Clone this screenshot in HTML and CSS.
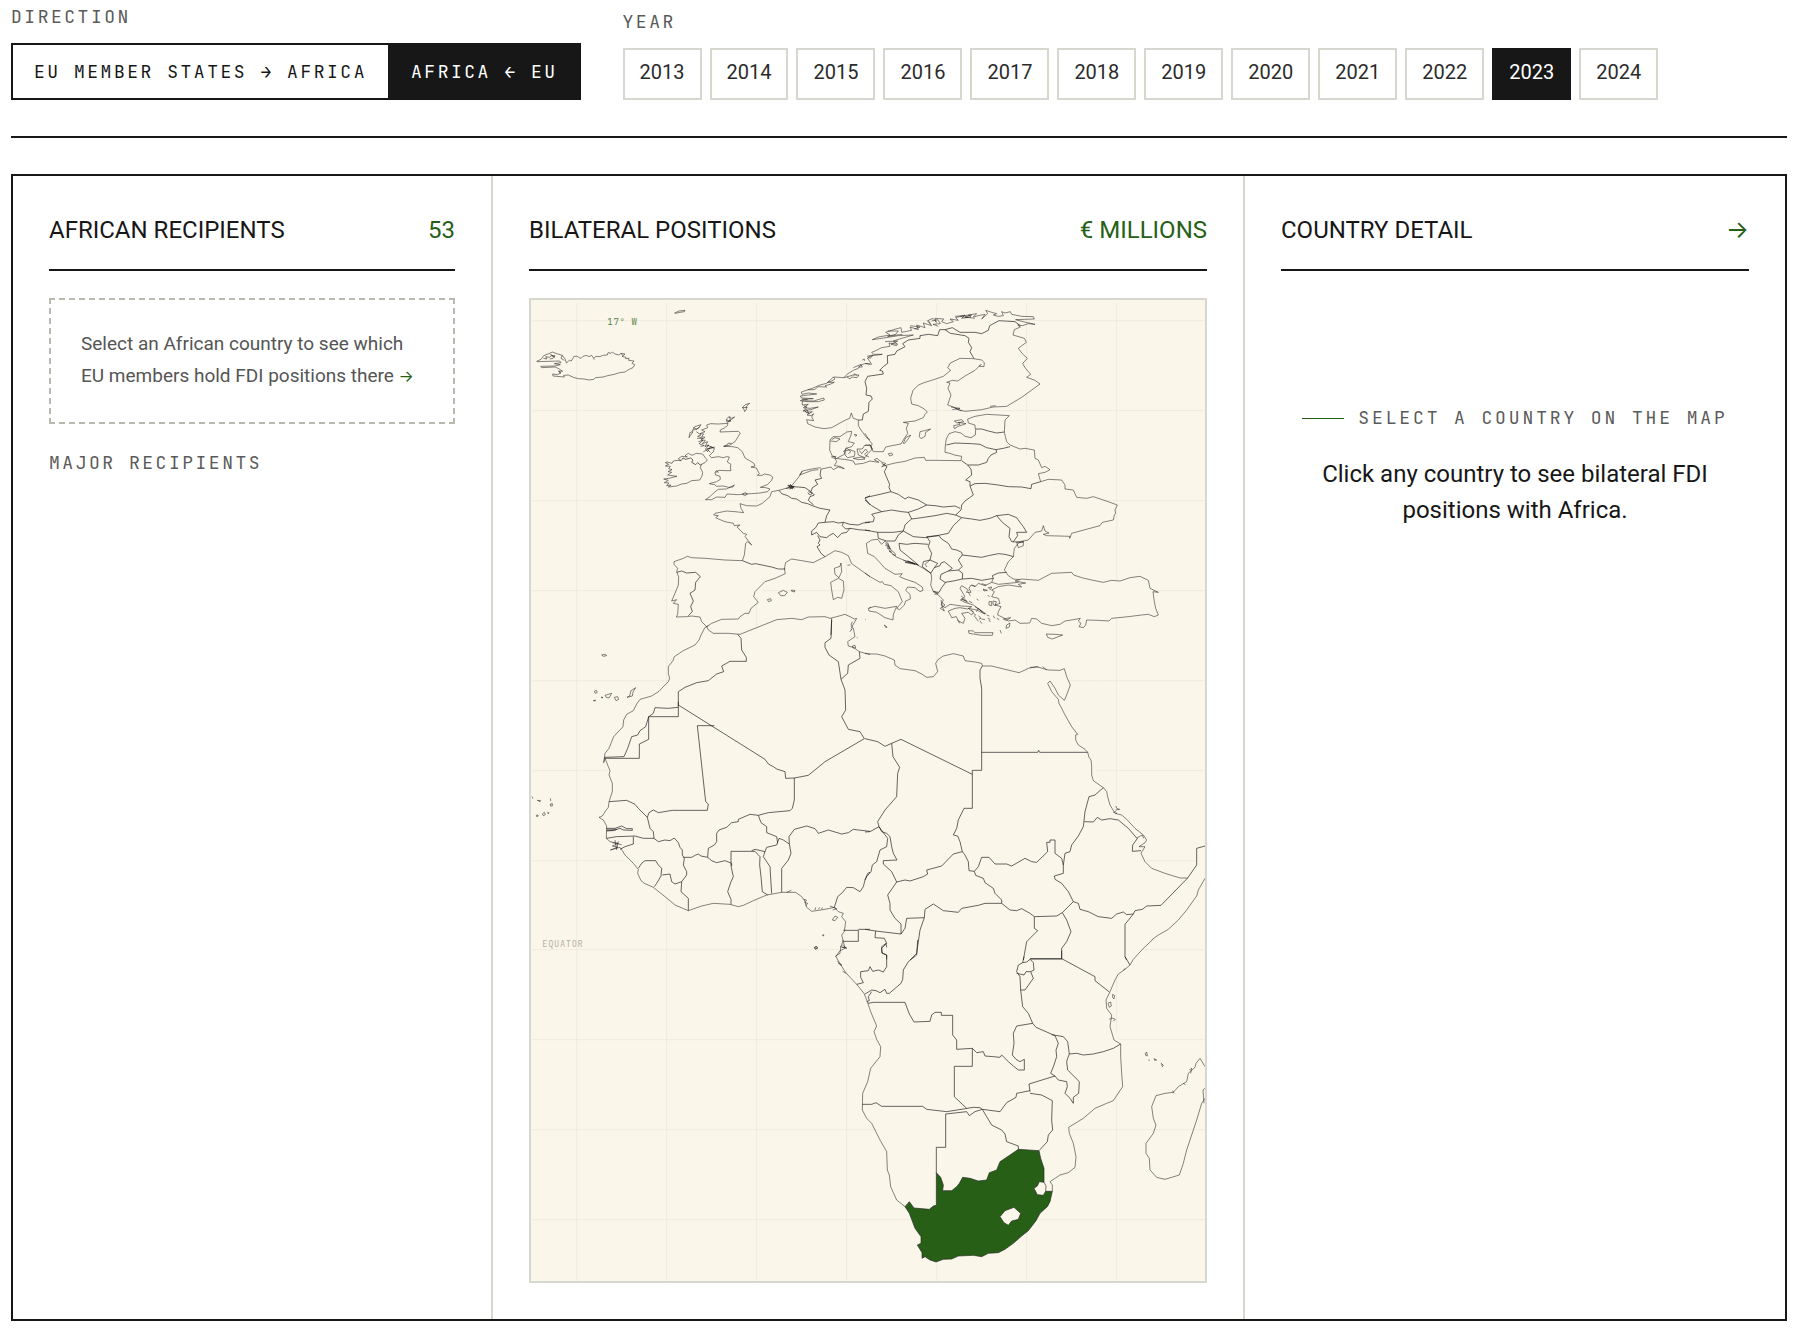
FILE: index.html
```html
<!DOCTYPE html>
<html lang="en">
<head>
<meta charset="utf-8">
<meta name="viewport" content="width=device-width, initial-scale=1">
<title>EU–Africa bilateral FDI positions</title>
<link rel="stylesheet" href="styles.css">
</head>
<body>
<header class="controls">
  <div class="control">
    <span class="label" id="direction-label">DIRECTION</span>
    <div class="toggle" role="group" aria-labelledby="direction-label">
      <button class="toggle-btn" type="button">EU MEMBER STATES → AFRICA</button>
      <button class="toggle-btn is-active" type="button">AFRICA ← EU</button>
    </div>
  </div>
  <div class="control">
    <span class="label" id="year-label">YEAR</span>
    <div class="years" role="group" aria-labelledby="year-label">
      <button class="year" type="button">2013</button>
      <button class="year" type="button">2014</button>
      <button class="year" type="button">2015</button>
      <button class="year" type="button">2016</button>
      <button class="year" type="button">2017</button>
      <button class="year" type="button">2018</button>
      <button class="year" type="button">2019</button>
      <button class="year" type="button">2020</button>
      <button class="year" type="button">2021</button>
      <button class="year" type="button">2022</button>
      <button class="year is-active" type="button">2023</button>
      <button class="year" type="button">2024</button>
    </div>
  </div>
</header>

<main class="panels">
  <section class="panel">
    <div class="panel-head"><h2>AFRICAN RECIPIENTS</h2><span class="accent">53</span></div>
    <p class="hint">Select an African country to see which EU members hold FDI positions there <span class="hint-arrow">→</span></p>
    <h3 class="label">MAJOR RECIPIENTS</h3>
  </section>

  <section class="panel">
    <div class="panel-head"><h2>BILATERAL POSITIONS</h2><span class="accent">€ MILLIONS</span></div>
    <svg class="map" viewBox="18 15 2022 2943" role="img" aria-label="Map of Europe and Africa">
      <defs>
        <pattern id="hatch" width="14" height="14" patternUnits="userSpaceOnUse" patternTransform="rotate(35)">
          <path class="hatch-line" d="M0 0V14"/>
        </pattern>
      </defs>
      <path class="grid" d="M155 24V2958M425 24V2958M695 24V2958M965 24V2958M1235 24V2958M1505 24V2958M1775 24V2958M20 77H2040M20 347H2040M20 617H2040M20 887H2040M20 1157H2040M20 1427H2040M20 1697H2040M20 1964H2040M20 2234H2040M20 2504H2040M20 2774H2040"/>
      <rect x="290" y="1156" width="1480" height="344" fill="url(#hatch)"/>

      <!-- land masses, under the coastlines -->
      <path class="land" d="M540 1000L440 1105 430 1175 340 1220 240 1390 262 1490 225 1567 250 1640 345 1755 490 1845 640 1833 770 1790 845 1835 955 1860 940 1985 1030 2120 1065 2280 1015 2400 1085 2570 1090 2660 1140 2735 1190 2850 1230 2898 1430 2868 1570 2735 1580 2660 1650 2620 1633 2497 1790 2385 1785 2240 1745 2120 1780 2035 1880 1935 1985 1845 2040 1750 2040 1655 2015 1660 2010 1715 1985 1748 1880 1720 1735 1478 1698 1395 1650 1320 1580 1190 1617 1215 1634 1170 1617 1122 1480 1132 1320 1080 1240 1095 1205 1147 1100 1110 985 1055 975 970 800 972 645 1018Z"/>
      <path class="land" d="M1450 360L1330 370 1350 400 1265 430 1262 470 1300 490 1080 505 960 500 925 524 835 530 735 605 660 655 570 660 662 722 652 795 450 805 455 965 545 990 680 930 700 900 781 830 930 770 1010 830 1120 890 1190 885 1130 850 1040 780 1060 740 1218 840 1230 900 1300 970 1320 880 1400 855 1440 830 1470 760 1530 720 1640 720 1770 660 1770 630 1610 580 1530 500 1455 450Z"/>
      <path class="land" d="M845 374L897 400 1000 375 1040 468 1130 445 1200 350 1157 310 1275 220 1370 200 1270 262 1270 330 1445 332 1545 267 1490 190 1480 90 1380 50 1150 110 1020 200 830 290Z"/>

      <!-- north-west Europe -->
      <g class="coast">
        <path d="M449 54L462 48 480 46 478 50 465 52 452 55Z"/>
        <path d="M35 199L48 193 56 182 72 176 82 171 95 176 112 181 121 193 124 204 133 196 139 198 147 184 157 184 163 188 168 190 174 184 184 181 192 185 200 181 206 190 213 184 225 185 233 181 247 180 249 173 258 175 262 171 270 177 282 180 288 175 300 177 291 184 303 187 302 191 312 190 311 196 327 198 321 205 329 209 324 218 312 223 300 231 284 233 268 238 248 242 234 246 212 248 206 253 192 255 178 252 160 251 145 247 130 240 116 241 118 246 84 243 83 237 98 239 108 233 101 228 113 229 103 222 91 216 50 218 47 214 90 213 106 209 88 206 108 203 104 198 72 199 38 200ZM55 190L66 192 62 185 74 187 80 180 89 186 76 178M80 184L90 182 84 190 74 192M112 181L108 190 118 196M206 190L208 194M288 175L294 182M101 228L106 236"/>
        <path d="M445 498L441 505 426 501 421 503 431 508 421 513 436 514 431 521 441 524 429 530 440 532 428 540 456 544 431 550 416 552 430 556 418 563 432 564 425 572 438 570 430 576 455 573 470 567 485 565 500 557 524 555 531 543 533 532 526 518 529 508 540 503 547 495 540 487 533 477 514 475 501 481 490 475 480 482 487 486 470 484 460 491 468 497 456 496Z"/>
        <path d="M557 386L580 387 609 385 607 392 598 399 586 405 585 411 610 410 640 409 646 414 640 424 630 440 615 450 596 454 622 455 638 458 652 470 660 489 672 496 686 504 690 513 678 516 694 519 703 536 697 541 712 541 718 537 735 540 743 546 740 556 727 569 706 577 722 578 735 582 728 590 705 594 680 596 660 597 640 599 606 597 600 607 575 606 560 614 541 614 556 604 568 592 580 583 605 582 628 570 624 576 610 577 595 573 575 574 569 569 553 566 575 560 586 553 585 544 572 540 570 534 582 526 603 527 618 527 616 516 618 508 607 501 613 486 604 485 595 488 580 485 560 488 553 482 565 470 568 460 556 455 548 470 541 462 552 450 540 455 548 440 532 446 541 436 528 435 540 427 530 425 536 417 525 416 540 410 530 405 548 398 545 390Z"/>
        <path d="M514 410L528 420 518 424 534 430 516 430M520 440L534 436 522 446 538 452 526 454M545 450L565 458 545 462 570 456M535 470L548 464 556 472M596 454L606 450 610 444 620 446M569 532L576 526 580 534"/>
        <path d="M502 407L509 395 528 389 520 400 506 405ZM495 412L504 410 496 422 492 428ZM505 398L516 403 524 395M604 372L612 365 618 370 629 366 620 373 610 380ZM608 376L616 378 606 382 604 374M614 364L616 380M652 338L661 329 674 325 664 334 665 342 659 350 656 340ZM652 338L668 337M652 597L661 593 667 597 659 602Z"/>
        <path d="M1035 207L1018 206 1005 212 1000 220 985 226 966 238 957 248 925 246 915 256 905 265 885 270 862 280 829 291 831 298 850 294 875 297 850 300 826 303 829 309 865 311 835 313 826 317 866 318 896 309 898 315 880 320 850 320 832 318 832 330 850 328 835 338 855 340 880 336 858 344 835 346 846 352 862 350 846 360 858 362 866 356 860 366 866 377 845 374 848 386 870 396 897 401 920 398 945 384 962 375 974 370 979 354 985 370 1000 375 1000 392 1010 408 1025 428 1035 434"/>
        <path d="M957 248L985 240 1002 240 996 248 980 246 975 252 966 246M985 240L990 236 996 242M925 246L930 252 920 258 908 262 928 262 915 268 900 272 905 276 880 275 868 284 848 284M985 218L1008 208 1012 216 1000 216M1012 195L1018 192 1018 198M1028 190L1035 182M832 312L848 314M836 332L846 336 838 342M840 350L852 356 846 346M834 350L842 344 850 348"/>
        <path d="M932 487L921 482 914 465 915 435 924 425 945 425 965 411 980 409 978 420 970 440 988 444 980 455 962 460 958 478 935 490M916 438L934 440 945 432 930 428 920 434M988 418l8 2-4 4ZM960 468L975 464 990 470 988 484 968 488 960 480ZM996 462L1012 462 1018 452 1035 449 1042 462 1030 475 1020 488 1000 480ZM985 490L1010 486 1020 492 1000 494ZM955 470L966 460 978 470 970 476M918 486L932 484 930 490 922 488M1003 466L1010 476 1022 462 1028 470 1018 478"/>
        <path d="M1035 498L1015 505 990 508 985 498 965 494 930 490 935 500 928 512 945 514 958 521 940 516 925 524 918 516 890 522 885 518 860 522 832 528 822 545 810 560 800 572 788 572 800 578 783 580 762 586 740 590 735 605 712 625 695 633 665 632 645 626 648 640 656 653 630 650 605 648 585 652 570 655 566 660 580 662 572 668 585 674 600 680 625 685 628 692 645 690 636 696 655 715 665 718 660 724 668 735 680 750 668 740 662 745 658 780 652 797 600 795 540 790 500 788 487 784 475 790 447 800 447 808 458 820 455 830 461 845 460 870 450 895 440 918 455 914 445 925 460 928 458 958 454 966 485 965 500 963 525 966 530 980 545 995 560 985 590 973 640 972 645 965 660 955 672 955 678 940 700 922 686 905 690 890 720 860 750 850 781 836 778 822 782 802 800 792 830 797 865 803 880 795 900 785 930 767 950 772 970 782 980 806 1000 820 1035 845"/>
        <path d="M832 528L824 540 840 534 862 526 880 524M790 570L806 576 794 582 808 574 792 574 804 582 796 568 808 580M948 804L950 830 942 848 930 838 928 820 945 814ZM917 862L940 850 955 858 957 885 950 910 938 907 925 914 920 885ZM760 893l15-7 12 6-8 10-12 0ZM800 885l10 2-2 4-9-3ZM727 914l10-3 2 6-8 3ZM968 810H976M1032 940l6-4"/>
        <path d="M978 1000L995 970 988 972 975 965 960 958 935 965 915 970 900 965 850 966 830 974 800 970 755 974 715 990 695 998 670 1008 645 1018 610 1015 565 1015 550 1005 545 995"/>
      </g>
      <g class="border">
        <path d="M468 497L474 489 482 493 497 489 504 495 500 502 512 509 518 503 526 510 530 508M455 832L470 828 485 834 512 832 526 845 512 862 510 885 495 895 505 918 497 935 502 950 490 962M652 797L680 808 692 806 720 812 740 816 760 822 781 822M762 586L770 596 788 602 800 610 815 612 830 622 848 626 862 632 885 640 915 645 905 662 900 682M783 580L800 575 820 576 840 578 858 590M888 522L885 540 890 550 870 555 878 568 862 578 858 590 868 600 855 605 850 616 866 630M850 590L862 594 856 600 848 594M900 682L880 684 872 698 860 708 860 720 875 712 885 725 905 728 915 720 925 715 938 728 950 715 965 712 975 700 962 702 952 692 955 682 940 684 925 680 900 682M955 682L975 688 1000 690 1015 684 1035 682M975 700L1000 704 1035 707M878 722L885 735 880 745 885 750 876 755 888 775 900 785M1035 602L1020 610 1035 630"/>
        <path d="M982 1000L975 1010M920 970L918 1020"/>
      </g>
      <text class="map-tag meridian" x="247" y="90">17° W</text>

      <!-- north-east Europe and the eastern Mediterranean -->
      <g transform="translate(1020 0)">
        <g class="coast">
          <path d="M0 415L12 435 22 447 16 455 25 470 55 470 62 456 80 452 108 447 118 430 128 415 124 400 130 385 115 382 150 378 175 368 180 358 187 351 178 342 160 332 140 327 137 310 144 286 160 270 180 262 200 256 235 244 257 226 248 218 256 204 285 190 325 191 350 195 358 203 357 215 343 214 348 208 330 226 300 243 278 258 262 256 245 262 255 264 249 280 258 300 248 330 265 336 280 344 300 349 350 344 385 336 425 334 470 307 525 267 510 256 485 247 497 238 480 218 473 205 480 198 487 190 472 176 460 160 484 142 478 130 444 120 448 104 466 96 458 90 472 92 490 86 510 88 482 82 452 74 508 72 505 65 470 64 440 58 436 50 420 54 410 50 415 62 400 64 385 60 395 56 380 52 362 46 368 56 350 72 360 58 340 62 325 66 335 56 310 60 318 66 290 70 300 60 272 68 280 76 255 72 265 80 245 86 230 80 236 72 210 70 214 82 204 70 190 76 200 92 175 84 180 98 155 90 160 104 135 96 140 106 110 112 108 98 85 104 62 112 75 120 40 126 22 134 50 130 100 122 145 120 110 130 85 138 98 148 72 144 75 154 50 158 30 168 20 172 26 178 52 178 22 182 8 190 20 208 0 205"/>
          <path d="M270 64L320 60 300 66 330 70M285 64L310 68M200 78L218 74 226 86 204 88 220 94M186 76L196 88M68 108L100 108 92 118 68 124 112 118M136 92L165 96 148 102M60 140L98 138 78 148 96 152M6 184L24 180 14 192M258 336L285 340 262 344M270 340L290 348M375 334L392 332"/>
          <path d="M70 476l10-2 3 6-9 3ZM163 425L165 410 182 406 197 402 182 412 180 424 168 431ZM115 445L122 428 137 420 128 434 118 446ZM266 392L285 388 280 382 303 386 280 394 268 401ZM268 378L290 374 296 380 276 384Z"/>
          <path d="M433 362L400 360 365 358 330 364 308 372 310 384 330 390 330 396 332 403 331 420 318 428 300 424 288 414 270 410 252 416 244 432 241 450 240 472 255 475 268 480 290 484 288 497 210 496 182 496 178 487 150 489 120 499 90 504 66 510 50 515 62 506 48 500 36 490 28 494 42 502 15 498"/>
          <path d="M0 450L18 452 22 464M0 480L12 486M15 845L0 834M15 845L45 862 52 860 58 868 78 872 100 890 112 920 95 940 104 944 118 930 122 918 136 912 135 898 122 886 128 876 150 878 165 890 174 886 172 876 150 862 120 852 104 845 112 836 90 838 60 820 42 800 28 785 8 775 4 745 20 735 38 733 50 748 60 738 70 750 78 765 90 775 92 785 120 797 150 806 175 820 198 835 200 850 197 870 205 890 220 900 235 915 228 930 240 938 255 928 290 933 320 935 308 942 285 938 270 940 250 948 260 968 274 965 280 978 295 985 300 970 290 955 310 952 320 960 325 952 310 940 335 945 355 955 362 956 345 945 325 930 300 922 286 915 300 905 285 880 290 872 300 878 310 885 304 892 318 892 312 880 318 870 330 875 340 865 360 872 380 862"/>
          <path d="M385 850L380 862 400 868 460 862 468 854 445 852 430 842 418 825 430 800 445 785 448 760 460 745 475 738 475 752 460 758 455 742 490 735 510 712 530 708 535 692 540 708 552 714 535 718 545 722 615 724 614 730 620 715 660 704 705 692 712 682 745 675 748 660 752 655 750 645 757 630 735 622 715 615 685 605 665 610 635 607 625 585 600 582 600 570 590 555 550 553 527 560 520 536 540 532 555 524 540 514 530 518 520 495 510 490 508 465 480 460 465 462 435 450 425 440 418 412 420 375 433 362"/>
          <path class="filled" d="M400 875L430 870 470 876 460 868 482 864 450 858 470 852 520 856 560 835 620 832 626 840 650 848 680 855 715 862 740 856 765 858 795 848 825 844 850 856 855 880 880 892 864 890 868 920 872 940 880 960 868 965 850 958 830 960 790 965 740 970 732 978 700 976 665 975 662 990 655 998 642 995 648 985 640 978 646 970 625 974 600 978 585 988 560 992 530 985 515 972 500 970 494 984 465 985 450 975 430 978 415 968 398 960 400 950 408 935 390 930 405 925 400 910 380 905 388 890 380 885Z"/>
          <path d="M10 940L30 934 60 940 95 934 85 958 84 975 60 968 35 952 12 948ZM58 990l8 6-2 3ZM0 972l2 2"/>
          <path d="M62 745L76 762 66 758 80 772 72 768 90 782 82 778M68 742L74 760M115 796L145 805 120 802 150 808 128 798 160 810 140 804M60 750L72 756M195 795L180 808 186 816M206 888L220 896 208 898M228 915L232 935 238 948 226 940 240 930 230 922"/>
          <path d="M288 902L305 918 290 912 310 922M330 935L345 945 360 958M312 918l10 6M325 955l6 4-3 6M340 962l8 8-6 2M350 972l10 2M330 965l10 14M365 960l8 3M368 970l8 3M385 962l4 8M395 970l8 4M372 920l8 0 0 12-8-2ZM384 918l10 2-4 12-6-4ZM355 882l12 4-10 2ZM320 870l12 4M350 866l14 4M370 878l10-2-4 8ZM335 912l6 4M368 900l6 6M318 945l8 6M415 972l22-4-12 8-8-2ZM425 990l10-6-2 12-10 4ZM405 1005l4 10M345 978l6 8M372 975l4 6M278 975l6 10M310 892l6 10M334 950L340 940 352 950"/>
        </g>
        <g class="border">
          <path d="M-20 375L-8 375 -5 357 10 349 12 322 22 312 18 303 3 300 5 280 0 260 8 244 55 237 52 228 44 226 56 214 68 205 67 182 90 178 95 168 120 155 113 146 130 135 165 130 165 122 190 118 218 122 224 104 240 104 262 98 285 112 330 112 350 116 370 106 374 92 402 77 450 80 466 92M240 104L256 115 300 122 312 130 310 142 320 158 315 170 327 191"/>
          <path d="M332 402L350 402 370 408 395 414 418 411M244 450L270 444 320 446 345 448 365 458 393 464 415 460 435 455M393 464L395 472 378 480 370 490 365 502 340 510 308 510 290 497M308 510L318 522 320 540 302 555 315 560 315 573 325 600 300 618 290 630 288 645 272 660M315 573L330 566 360 565 400 570 430 575 470 576 498 581 500 568 527 560M50 505L66 515 58 530 64 545 74 568 72 578 78 590 100 598 120 612 130 606 160 615 185 630 210 632 235 636 270 633 285 640M78 590L45 598 0 608M0 615L20 632 50 650 80 645 110 650 130 652M50 650L20 658 28 668 25 680 0 682M0 705L38 712 85 712 115 708M185 630L160 642 130 652 140 672 170 668 210 662 245 655 272 660 290 668 265 692 250 715 215 722 180 728 145 725 115 708 120 690 130 680 140 672M290 668L320 672 345 676 375 670 395 662 430 658 455 668 465 682 475 695 485 712 455 712 458 722 445 740M395 662L412 682 435 700 432 725 440 740 475 742"/>
          <path d="M185 725L222 722 230 732 250 745 260 762 275 765 290 772 292 780 350 787 370 782 400 776 420 778 446 785M292 780L280 795 292 815 280 825 293 835 292 852M228 838L250 828 280 825M228 838L225 852 240 862 265 858 292 852 320 850 350 856 385 850 382 842 400 834 425 832M197 835L208 818 225 812 228 804 238 800 262 820 250 828M185 725L195 740 190 755 200 775 195 795 175 800 172 815 198 835M195 795L218 805 208 818M190 748L150 745 125 748 102 745 105 765 130 785 160 810M38 712L40 730 65 738 90 738 100 720 115 708M205 890L222 892 230 878 242 862"/>
        </g>
      </g>

      <!-- West Africa -->
      <g transform="translate(0 975)">
        <g class="coast">
          <path d="M550 18L540 22 528 45 522 60 510 75 475 92 448 110 444 122 430 140 430 160 434 175 430 185 415 200 402 214 380 228 345 238 335 252 325 272 305 283 296 300 294 320 266 350 258 370 252 385 240 400 236 428 240 415 250 440 255 452 252 465 262 490 262 515 252 545 250 562 242 572 232 588 222 592 235 600 245 618 244 655 255 665 280 670 262 678 278 682 256 690 285 682 292 692 300 705 325 730 340 748 338 760 348 782 358 790 385 802 420 830 450 855 490 872 510 865 530 858 565 850 615 853 640 860 655 856 685 842 725 825 770 817 812 817 830 830 838 840 845 862 860 874 900 868 928 862 940 875 955 880 950 890 962 905 958 935 950 945 955 965 960 985 945 992 932 1010"/>
          <path d="M1035 104L1003 95 985 82 970 78 968 65 990 50 985 25 978 15 982 5M982 78l8-2 2 8-8 0ZM995 52l3 2"/>
          <path d="M230 105l10-2 5 4-10 2ZM208 214l6-3 3 6-6 3ZM205 242l6-2 0 3ZM228 232l4-1 1 3ZM240 226l20-6-8 14-8-2ZM268 232l10-2 3 8-8 4ZM306 232L314 228 318 212 332 203 324 216 322 228Z"/>
          <path d="M21 530l3 6M37 541l10 1-2 3ZM76 535l1 8M76 552l6-1 0 7-5 0ZM34 586l5-1 0 4-5 0ZM52 582l6-5 3 7-6 3ZM66 579l6-1-2 4"/>
          <path d="M922 900L930 888 938 892 930 902ZM869 982l6-3 3 6-6 2ZM892 946l4-2 0 4ZM245 628L275 628 265 632 245 632M262 668L290 674M280 664L276 684M270 660L275 690M836 838l8 2-4 8 8 2-6 8M870 870l2-8M880 868l4-6M890 868l2-6M915 858l20 8-12 4M785 817l14-6M952 975l14 10-16-4"/>
        </g>
        <g class="border">
          <path d="M638 43L648 55 650 90 664 112 664 124 615 124 590 138 596 155 575 162 550 182 515 188 480 202 460 215V258M460 262L430 265 390 263 385 280 371 290 362 320 345 332 338 345 320 350 308 385 297 410 238 412M238 415H343V372L371 358V290H460V245M460 255L720 418 730 432 745 440 755 447 780 455 782 475 808 474 850 466 900 425 1018 356M568 317H517L542 545 550 552 547 571H442L400 578 385 570 372 578 367 592"/>
          <path d="M252 545L305 541 330 553 340 565 367 592 375 625 385 635 387 655 355 655 330 648 275 650 244 655M244 625L270 625 290 618 305 626 322 626 322 631 295 630 285 625 270 630 245 633M325 650V672L300 680 285 688M387 655L400 665 420 660 435 662 448 654 460 668 465 682 472 690 472 705 478 715 475 735 485 755 485 765 470 785M340 745L350 730 360 722 392 722 400 735 410 745 408 768 395 790 388 800M412 765L435 762 440 785 450 792 470 785 468 815 490 835 490 872M475 712L500 712 512 705 520 702 528 708 548 712 550 685 568 675 575 665 575 640 582 630 605 622 620 608 640 605 640 598 675 583 700 586M548 712L560 722 575 728 600 722 620 730 620 738M690 694H618V738L625 770 618 785 608 815 618 838 618 853M690 694L705 710 704 735 708 770 712 815 728 825M680 692L690 688 720 695 715 710 735 740 738 790 740 820M720 695L725 682 755 675 762 655 775 660 793 672 798 700 790 720 770 745V817M700 586L708 608 725 620 725 638 755 650 758 670M808 474V540L802 565 795 572 730 578 700 586M793 672L792 650 808 628 845 618 870 626 880 640 910 630 950 642 970 638 985 628 1000 630 1035 634M928 862L938 830 952 818 965 802 985 803 1005 815 1015 800 1020 780 1028 760 1035 757M955 931H1000V964H955M1000 928H1035M920 0L918 55 900 68 900 82 912 105 940 125 948 178 968 160 970 135 1005 115 1003 95M948 178L960 210 962 270 950 290 970 328 1005 335 1018 356"/>
        </g>
        <text class="map-tag equator" x="52" y="980">EQUATOR</text>
      </g>

      <!-- north-east Africa -->
      <g transform="translate(1020 975)">
        <g class="coast">
          <path d="M0 100L20 102 35 102 60 108 88 120 90 135 105 146 150 152 170 162 185 172 205 170 218 155 212 130 220 118 235 108 265 101 295 108 300 122 330 126 350 130 352 138 380 138 420 148 462 158 480 150 490 145 515 140 550 150 585 151 598 146 605 170 616 195 605 225 598 241 580 225 570 205 555 183 548 190 560 215 580 238 582 250 590 265 600 285 620 320 638 343 632 345 632 360 640 375 660 388 668 397 672 412 678 420 680 440 680 465 685 482 715 503 725 515 728 530 735 555 750 580 770 585 785 598 810 625 835 645 845 660 840 668 822 680 840 680 828 700 840 725 860 745 900 760 945 774 968 774"/>
          <path d="M1020 775L1000 810 995 828 965 870 940 900 910 928 880 945 860 960M495 142L520 141M533 140L545 150M745 578l6-4 4 8M752 558l4 8 8 2-12 2M815 654L832 645 836 655"/>
          <path d="M310 32L325 33 330 38 384 38 382 46 350 46 312 40ZM544 42L570 43 593 45 575 52 562 57 548 52Z"/>
        </g>
        <g class="border">
          <path d="M0 356L38 365 60 379 80 370 108 358 322 463M80 370L84 410 104 442 98 460 95 530 60 570 38 605 42 620M0 636L15 635 42 620 55 638 68 655 65 680 45 690 35 725 22 735 18 755 5 770 0 780M42 620L50 635 65 640 75 650 80 680 85 700 96 720 55 722 55 732 80 755 95 786 120 780 135 783 175 770 188 762 185 750 230 738 265 702 292 695M352 138L345 150 345 175 350 205V451H322V565H297L280 600 275 625 265 645 278 648 285 665 292 695 300 705 310 725 312 752 328 754M350 397H518L521 391 524 397H668M328 754L340 740 350 712 372 712 390 732 425 732 440 738 480 715 500 725 515 727 548 695 545 667H555V660H570V700L590 715 595 735V760L568 768 570 778 590 790 610 815 625 845M595 735L600 700 615 695 620 675 640 648 655 620 660 575 672 530 690 525 715 503M658 605L685 606 697 592 710 600 735 596 760 600 790 625 815 654M818 654L803 675 802 694 828 692M995 735V685L1020 678M995 735L968 774 888 856 845 858 832 868 810 872 805 882 780 913V1010L785 1020M625 845L640 850 645 868 670 875 700 890 740 895 755 882 775 876 785 884 805 882M625 845L592 878 605 900 618 935 605 965 590 985V1018M592 878L575 888 508 890 495 880 470 866 455 872 435 870 410 850 360 850 340 856 290 865 280 877 235 872 205 852 180 868 178 893 125 895 120 925 108 942M328 754L332 766 355 775 360 788 385 805 390 820 410 840 410 850M95 786L68 825 75 850 75 870 90 895 108 912V942L32 933 0 928M32 933L30 953 58 955 65 970 50 985 52 1000 65 1005V1018M178 893L165 930 155 1000 135 1020M508 890L508 925 518 932 485 965 475 1020M495 1017H590"/>
        </g>
      </g>

      <!-- southern Africa -->
      <g transform="translate(825 1935)">
        <g class="coast">
          <path d="M130 0L122 22 120 40 107 48 118 68 135 95 150 112 170 133 192 160 202 185 212 215 230 258 222 275 230 298 242 320 240 350 212 385 203 425 188 460 187 510 200 535 215 550 240 600 260 635 262 690 268 705 272 740 290 780 315 800"/>
          <path d="M757 754V735L750 725 780 705 805 698 825 682 828 650 820 610 808 580 806 562 850 535 885 505 920 490 940 482 968 440 965 400 962 350 962 312 942 300 930 260 935 225 920 205 918 180 930 155 945 120 955 102 975 88 990 75 1000 58 1030 25 1057 0"/>
          <path d="M1215 380L1200 355 1188 370 1185 382 1165 400 1160 425 1135 440 1120 457 1095 460 1068 467 1055 500 1060 535 1068 555 1060 580 1038 610 1038 640 1048 655 1050 690 1070 712 1095 718 1115 712 1138 705 1150 670 1160 630 1190 540 1205 490 1215 475M1215 445L1209 450 1212 490M1168 390L1175 385 1172 400M1118 452L1122 460M1150 430L1156 434"/>
          <path d="M938 163l6 4-2 10-4-4ZM924 190l8-4 2 12-6 4ZM928 238l8-4 10 4-6 6M1036 340l4-4 2 12-5-2ZM1045 360l5 1M1062 356l8 4-6 1ZM1084 370l6 6-3 4ZM43 22l6-2 3 4-6 4ZM112 64L126 76 114 70M128 94L138 100M120 20L138 24M975 85l-4 6"/>
        </g>
        <g class="border">
          <path d="M260 22L258 10 245 20 245 38 260 45 260 80 250 96 235 90 218 94 210 80 205 92 182 95 182 112 190 128 170 133M353 0L350 45 325 65 310 90 308 118 303 130 268 160 260 160 255 148 240 158 228 152 215 150 195 162M215 155L205 170 208 182 200 185M204 190L220 187 315 187 328 222 342 246 390 244 395 225 405 217 424 217V226H458V285L470 300V328L517 325V379H463V470L500 505M517 325L530 338 550 335 555 348 580 350 600 352 605 345 625 365 640 378 655 390H673V358L660 365 648 358 637 345 642 310 640 280 650 258 698 250"/>
          <path d="M672 50L668 68 655 75 650 95 660 110 662 150 668 200 685 220 698 250M668 68L680 66 690 58 700 68 702 90 692 95 678 95 672 105 650 100M692 95L700 115 675 150H662M690 56H785L885 110 885 122 928 156M785 56V32M975 50L990 75M698 250L708 262 740 276 765 287 775 310 768 330 770 350 762 375 752 400 765 408M755 284L790 290 803 305 808 342 803 355 800 365 803 390 838 425 836 460 820 472 820 490 810 475 795 460 802 440 800 425 775 420 765 408M808 342L830 340 850 345 880 342 910 335 940 325 962 312M765 408L687 432 690 455M690 452L650 460 648 472 620 488 600 515 547 508M690 460L725 465 757 482 755 540 758 570 745 585 742 605 717 632M547 508L560 530 575 555 605 570 615 582 620 605 655 618 655 628M187 493L215 493 228 488 245 499H368L380 508 440 515 490 507 520 502 540 503 547 508M437 522L500 515 508 527 525 515 547 508M437 522V622H409V700"/>
        </g>
        <path class="highlight" d="M409 698L422 712 430 735 428 752 455 752 470 740 478 730 488 712 510 715 535 723 560 720 568 698 590 690 600 665 630 645 655 628 717 632 722 655 732 685V727L718 725 712 738 702 745 712 764 730 766 737 754 757 754 750 785 742 800 720 820 708 842 685 872 665 888 640 910 615 928 595 938 565 940 545 950 520 946 475 948 455 957 430 958 408 966 390 960 375 950 366 955 366 938 352 915 363 910 363 890 345 865 328 820 315 800 328 785 342 804 388 808 400 798 409 796Z"/>
        <path class="enclave" d="M600 830L615 812 642 802 662 820 655 838 635 843 625 856 612 848ZM732 727L738 738 737 754"/>
      </g>
    </svg>
  </section>

  <section class="panel">
    <div class="panel-head"><h2>COUNTRY DETAIL</h2><span class="accent head-arrow">→</span></div>
    <div class="empty">
      <p class="eyebrow label">SELECT A COUNTRY ON THE MAP</p>
      <p class="empty-text">Click any country to see bilateral FDI positions with Africa.</p>
    </div>
  </section>
</main>
</body>
</html>
```
FILE: styles.css
```css
:root {
  --ink: #171717;
  --muted: #5a5a5a;
  --line: #d6d7ce;
  --green: #275f17;
  --paper: #faf6ea;
  --sans: Roboto, "Liberation Sans", sans-serif;
  --mono: "JetBrains Mono", "Roboto Mono", "DejaVu Sans Mono", monospace;
}

* { box-sizing: border-box; }

body {
  margin: 0;
  padding: 0 13px 15px 11px;
  background: #fff;
  color: var(--ink);
  font-family: var(--sans);
}

h2, h3, p { margin: 0; font-weight: 400; }

.label {
  display: block;
  font: 400 18px/24px var(--mono);
  letter-spacing: 0.14em;
  color: var(--muted);
}

.controls {
  display: flex;
  align-items: flex-end;
  gap: 42px;
  padding: 5px 0 36px;
  border-bottom: 2px solid var(--ink);
}

.control .label { margin-bottom: 14px; }

.toggle {
  display: flex;
  border: 2px solid var(--ink);
}

.toggle-btn {
  height: 53px;
  padding: 0 21px;
  border: 0;
  background: #fff;
  color: var(--ink);
  font: 400 18px/24px var(--mono);
  letter-spacing: 0.14em;
  white-space: nowrap;
}

.toggle-btn + .toggle-btn { border-left: 2px solid var(--ink); }
.toggle-btn.is-active { background: var(--ink); color: #fff; }

.years { display: flex; gap: 8px; }

.year {
  height: 52px;
  padding: 0 15px 4px;
  border: 2px solid var(--line);
  background: #fff;
  color: #2b2b2b;
  font: 400 20px/24px var(--sans);
}

.year.is-active {
  border-color: var(--ink);
  background: var(--ink);
  color: #fff;
}

.panels {
  display: grid;
  grid-template-columns: minmax(0, 480fr) minmax(0, 752fr) minmax(0, 540fr);
  margin-top: 36px;
  border: 2px solid var(--ink);
}

.panel { padding: 36px; }
.panel:not(:last-child) { border-right: 2px solid var(--line); }

.panel-head {
  display: flex;
  justify-content: space-between;
  margin-bottom: 27px;
  padding-bottom: 21px;
  border-bottom: 2px solid var(--ink);
  font-size: 24px;
  line-height: 36px;
}

.panel-head h2 { font-size: inherit; }
.accent { color: var(--green); }
.head-arrow { font-family: Inter, sans-serif; }

.hint {
  margin-bottom: 27px;
  padding: 28px 30px 30px;
  border: 2px dashed #b9baae;
  color: #555;
  font-size: 19px;
  line-height: 32px;
}

.hint-arrow {
  color: var(--green);
  font-family: Inter, sans-serif;
  font-size: 16px;
  line-height: 16px;
}

.map {
  display: block;
  width: 100%;
  border: 2px solid var(--line);
  background: var(--paper);
}

.map path { stroke-linejoin: round; }
.grid { fill: none; stroke: #efebdf; stroke-width: 3; }
.hatch-line { stroke: #f5f1e4; stroke-width: 3; }
.land { fill: var(--paper); }
.coast path { fill: none; stroke: #1a1a1a; stroke-width: 2; stroke-opacity: 0.8; }
.coast .filled { fill: var(--paper); }
.border path { fill: none; stroke: #1a1a1a; stroke-width: 2; }
.highlight { fill: var(--green); stroke: #2b2b2b; stroke-width: 2; }
.enclave { fill: var(--paper); stroke: #2b2b2b; stroke-width: 2; }

.map-tag { font-family: var(--mono); letter-spacing: 2px; }
.meridian { fill: #5a8549; font-size: 27px; }
.equator { fill: #b5b3a6; font-size: 26px; }

.empty { padding-top: 108px; text-align: center; }

.eyebrow {
  display: flex;
  align-items: center;
  justify-content: center;
  gap: 14px;
  margin-bottom: 26px;
  letter-spacing: 0.16em;
  white-space: nowrap;
}

.eyebrow::before {
  content: "";
  width: 42px;
  height: 1px;
  margin-top: 1px;
  background: var(--green);
}

.empty-text {
  max-width: 400px;
  margin: 0 auto;
  font-size: 24px;
  line-height: 36px;
}
```
